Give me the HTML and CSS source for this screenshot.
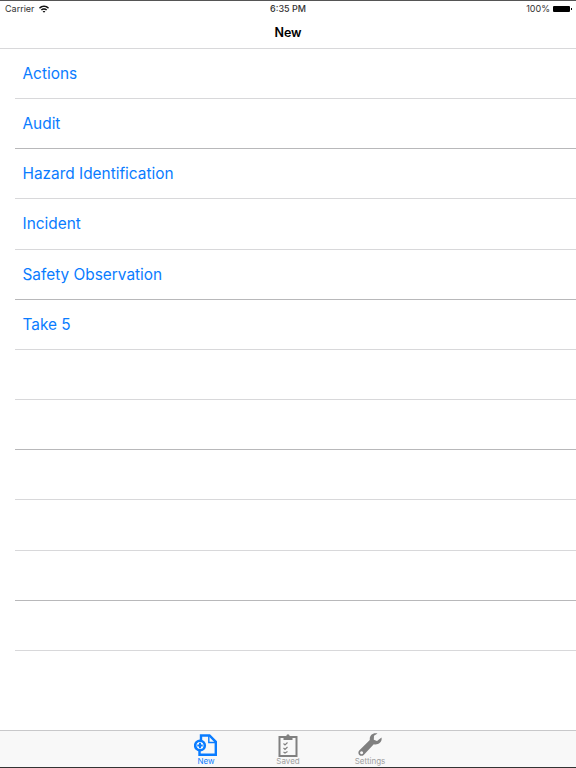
FILE: index.html
```html
<!DOCTYPE html>
<html lang="en">
<head>
  <meta charset="UTF-8" />
  <title>New</title>
  <link rel="stylesheet" href="styles.css">
</head>
<body>
  <div class="screen">
    <header class="top">
      <div class="status">
        <div class="status-left">
          <span>Carrier</span>
          <svg class="wifi" width="10" height="8" viewBox="0 0 11 8"><path d="M0 2.600C3 -.6 8 -.6 11 2.600L9.900 3.800C7.400 1.300 3.600 1.300 1.100 3.800Z"/><path d="M2 4.600C3.900 2.700 7.100 2.700 9 4.600L7.900 5.700C6.500 4.400 4.500 4.400 3.100 5.700Z"/><path d="M4 6.600C4.800 5.900 6.200 5.900 7 6.600L5.500 8Z"/></svg>
        </div>
        <div class="status-time">6:35 PM</div>
        <div class="status-right">
          <span>100%</span>
          <span class="battery"></span>
        </div>
      </div>
      <h1 class="title">New</h1>
    </header>

    <ul class="list">
      <li class="row">Actions</li>
      <li class="row">Audit</li>
      <li class="row">Hazard Identification</li>
      <li class="row">Incident</li>
      <li class="row">Safety Observation</li>
      <li class="row">Take 5</li>
      <li class="row"></li>
      <li class="row"></li>
      <li class="row"></li>
      <li class="row"></li>
      <li class="row"></li>
      <li class="row"></li>
    </ul>

    <nav class="tabs">
      <a class="tab active" href="#">
        <svg width="24" height="24" viewBox="0 0 24 24">
          <path d="M7 7V2.500H15.500L21.800 8.800V21.800H5.500V18" fill="none" stroke="currentColor" stroke-width="2.400"/>
          <path d="M14.800 2.500V9.500H21.800" fill="none" stroke="currentColor" stroke-width="1.400"/>
          <circle cx="6" cy="12.500" r="4.800" fill="#fff" stroke="currentColor" stroke-width="2.600"/>
          <path d="M3.300 12.500H8.700M6 9.800V15.200" stroke="currentColor" stroke-width="2"/>
        </svg>
        <span>New</span>
      </a>
      <a class="tab" href="#">
        <svg width="24" height="24" viewBox="0 0 24 24">
          <rect x="3.500" y="4" width="17" height="19" fill="none" stroke="currentColor" stroke-width="2"/>
          <path d="M7.500 7V3.500H10.300C10.300 .5 13.700 .5 13.700 3.500H16.500V7Z" fill="currentColor"/>
          <path d="M7.500 10.500L9 12L11.500 9.500M7.500 15L9 16.500L11.500 14M7.500 19L9 20L11.500 18.500" fill="none" stroke="currentColor" stroke-width="1.100"/>
        </svg>
        <span>Saved</span>
      </a>
      <a class="tab" href="#">
        <svg width="24" height="24" viewBox="0 0 24 24">
          <path fill-rule="evenodd" d="M23.500 4.500L19 8L15.800 6.700L16 2.800L19.500 .6C15 -.6 11.300 2.300 11.800 7L1.200 17.500C0 19 .2 20.800 1.300 21.900C2.600 23.100 4.400 23.100 5.700 21.900L15.800 11.300C20.500 12.300 24.500 9 23.500 4.500ZM3.600 18.200A1.500 1.500 0 1 1 3.599 18.200Z" fill="currentColor"/>
        </svg>
        <span>Settings</span>
      </a>
    </nav>
  </div>
</body>
</html>
```

FILE: styles.css
```css
* { box-sizing: border-box; }
html, body { margin: 0; height: 100%; }
body { font-family: 'Inter', 'Liberation Sans', sans-serif; background: #fff; color: #000; overflow: hidden; }
a { text-decoration: none; }

.screen { height: 768px; display: flex; flex-direction: column; border-top: 1px solid #555; border-bottom: 1px solid #333; }

/* status + nav bar */
.top { height: 48px; flex: none; background: #fff; border-bottom: 1px solid #d8d8da; }
.status { height: 15px; display: grid; grid-template-columns: 1fr auto 1fr; align-items: center; padding: 0 5px; font-size: 9px; color: #333; }
.status-left { display: flex; align-items: center; gap: 4px; }
.status-time { font-weight: 500; }
.status-right { display: flex; align-items: center; justify-content: flex-end; gap: 3px; }
.wifi { fill: #111; }
.battery { width: 17px; height: 6px; background: #000; border-radius: 1px; margin-right: 1px; position: relative; }
.battery::after { content: ""; position: absolute; right: -2px; top: 2px; width: 1px; height: 2px; background: #000; }
.title { margin: 0; height: 32px; line-height: 34px; text-align: center; font-size: 12.5px; font-weight: 600; }

/* table */
.list { list-style: none; margin: 0; padding: 0 0 0 15px; flex: 1; }
.row { height: 50.17px; line-height: 50px; padding-left: 7.5px; font-size: 15.4px; color: #0a7cff; border-bottom: 1px solid #d8d8da; }
.row:nth-child(3n+2) { border-bottom-color: #b8b8ba; }

/* tab bar */
.tabs { height: 37px; flex: none; display: flex; justify-content: center; gap: 34px; padding-top: 2px; background: #f8f8f8; border-top: 1px solid #c8c8ca; }
.tab { width: 48px; display: flex; flex-direction: column; align-items: center; color: #808080; font-size: 8px; }
.tab span { line-height: 9px; color: #a0a0a0; }
.tab.active, .tab.active span { color: #0a7cff; }
```
